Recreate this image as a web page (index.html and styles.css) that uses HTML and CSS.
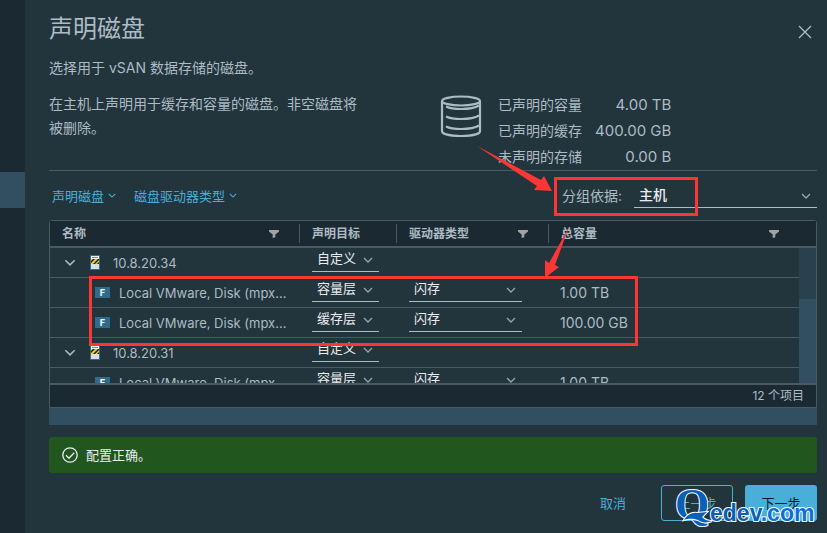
FILE: index.html
```html
<!DOCTYPE html>
<html lang="zh-CN">
<head>
<meta charset="utf-8">
<title>声明磁盘</title>
<link rel="stylesheet" href="styles.css">
</head>
<body>
<svg class="defs" aria-hidden="true">
  <symbol id="chevron" viewBox="0 0 10 6"><path d="M1 1l4 4 4-4" fill="none" stroke="currentColor" stroke-width="1.3"/></symbol>
  <symbol id="filter" viewBox="0 0 10 8"><path d="M0 0h10v1.500L6.300 4.500V7.200L3.700 8V4.500L0 1.500z" fill="currentColor"/></symbol>
  <symbol id="host" viewBox="0 0 10 15">
    <path d="M0 0h10v15H0z" fill="#2b6e8f"/><path d="M1 1h8v13H1z" fill="#f2f4f5"/>
    <path d="M2 2h6v1H2z" fill="#7d8e96"/><path d="M1 9h8v5H1z" fill="#d9dee0"/>
    <path d="M1 4h8v5H1z" fill="#f2c81c"/><path d="M1 6l2-2h2L1 8zM3 9l5-5h1v1L5 9zM7 9l2-2v2z" fill="#1a1a1a"/>
  </symbol>
</svg>
<div class="app">
  <aside class="rail"><div class="rail-active"></div></aside>
  <main class="wizard">
    <header class="head">
      <h1>声明磁盘</h1>
      <button class="close" aria-label="关闭"><svg viewBox="0 0 14 14"><path d="M1 1l12 12M13 1L1 13" fill="none" stroke="currentColor" stroke-width="1.3"/></svg></button>
    </header>
    <p class="lead">选择用于 vSAN 数据存储的磁盘。</p>
    <section class="summary">
      <p>在主机上声明用于缓存和容量的磁盘。非空磁盘将被删除。</p>
      <svg class="disks" viewBox="0 0 42 44" fill="none" stroke="currentColor" stroke-width="2.200">
        <ellipse cx="21" cy="7" rx="19" ry="4.500"/><path d="M2 7v30c0 3 8 5 19 5s19-2 19-5V7"/>
        <path d="M6 12.500c4 2 9 2.500 15 2.500 8 0 14-1 18-3.500M6 22.500c4 2 9 2.500 15 2.500 8 0 14-1 18-3.500M6 32.500c4 2 9 2.500 15 2.500 8 0 14-1 18-3.500"/>
      </svg>
      <dl class="stats">
        <dt>已声明的容量</dt><dd>4.00 TB</dd>
        <dt>已声明的缓存</dt><dd>400.00 GB</dd>
        <dt>未声明的存储</dt><dd>0.00 B</dd>
      </dl>
    </section>
    <div class="toolbar">
      <button class="link">声明磁盘<svg class="chev"><use href="#chevron"/></svg></button>
      <button class="link">磁盘驱动器类型<svg class="chev"><use href="#chevron"/></svg></button>
      <label class="group-label" for="group">分组依据:</label>
      <span class="pick pick-group"><select id="group"><option>主机</option></select><svg class="chev"><use href="#chevron"/></svg></span>
    </div>
    <section class="grid">
      <div class="viewport">
        <table>
          <colgroup><col><col class="c-target"><col class="c-drive"><col class="c-size"><col class="c-bar"></colgroup>
          <thead><tr>
            <th><div class="th">名称<svg class="filter"><use href="#filter"/></svg></div></th>
            <th><div class="th">声明目标</div></th>
            <th><div class="th">驱动器类型<svg class="filter"><use href="#filter"/></svg></div></th>
            <th><div class="th">总容量<svg class="filter"><use href="#filter"/></svg></div></th>
            <td></td>
          </tr></thead>
          <tbody>
            <tr><td><div class="name"><svg class="toggle"><use href="#chevron"/></svg><svg class="host"><use href="#host"/></svg>10.8.20.34</div></td>
              <td><span class="pick"><select aria-label="声明目标"><option>自定义</option></select><svg class="chev"><use href="#chevron"/></svg></span></td><td></td><td></td><td></td></tr>
            <tr><td><div class="name disk"><span class="flash">F</span>Local VMware, Disk (mpx...</div></td>
              <td><span class="pick"><select aria-label="声明目标"><option>容量层</option></select><svg class="chev"><use href="#chevron"/></svg></span></td>
              <td><span class="pick pick-drive"><select aria-label="驱动器类型"><option>闪存</option></select><svg class="chev"><use href="#chevron"/></svg></span></td><td class="size">1.00 TB</td><td></td></tr>
            <tr><td><div class="name disk"><span class="flash">F</span>Local VMware, Disk (mpx...</div></td>
              <td><span class="pick"><select aria-label="声明目标"><option>缓存层</option></select><svg class="chev"><use href="#chevron"/></svg></span></td>
              <td><span class="pick pick-drive"><select aria-label="驱动器类型"><option>闪存</option></select><svg class="chev"><use href="#chevron"/></svg></span></td><td class="size">100.00 GB</td><td></td></tr>
            <tr><td><div class="name"><svg class="toggle"><use href="#chevron"/></svg><svg class="host"><use href="#host"/></svg>10.8.20.31</div></td>
              <td><span class="pick"><select aria-label="声明目标"><option>自定义</option></select><svg class="chev"><use href="#chevron"/></svg></span></td><td></td><td></td><td></td></tr>
            <tr><td><div class="name disk"><span class="flash">F</span>Local VMware, Disk (mpx...</div></td>
              <td><span class="pick"><select aria-label="声明目标"><option>容量层</option></select><svg class="chev"><use href="#chevron"/></svg></span></td>
              <td><span class="pick pick-drive"><select aria-label="驱动器类型"><option>闪存</option></select><svg class="chev"><use href="#chevron"/></svg></span></td><td class="size">1.00 TB</td><td></td></tr>
          </tbody>
        </table>
        <div class="scrollbar"><div class="thumb"></div></div>
      </div>
      <footer class="count">12 个项目</footer>
    </section>
    <div class="hbar"></div>
    <div class="status" role="status">
      <svg viewBox="0 0 16 16" fill="none" stroke="currentColor" stroke-width="1.300"><circle cx="8" cy="8" r="7.200"/><path d="M4 8.200l3 3 5.200-5.400"/></svg>配置正确。
    </div>
    <div class="actions">
      <button class="btn plain">取消</button>
      <button class="btn outline">上一步</button>
      <button class="btn solid">下一步</button>
    </div>
  </main>
</div>
<svg class="marks" viewBox="0 0 827 533">
  <g fill="none" stroke="#fb3735" stroke-width="3">
    <path d="M555.500 178.500h141v36h-141zM90.500 277.500h546v67h-546z"/>
  </g>
  <g fill="#fb3735">
    <path d="M477 146L541 180l3-4 8 15-18-1 3-4z"/>
    <path d="M569 227L555 265l4 2-14 11v-18l4 3z"/>
  </g>
  <g class="brand">
    <text class="brand-q" x="675" y="519">Q</text>
    <path d="M684 520c3-5 8-8 13-7l10-1-5 5c3 3 6 4 10 4-5 2-10 2-14-1-4-1-8-2-14 0z"/>
    <text class="brand-name" x="710" y="521">edev<tspan class="brand-tail">.com</tspan></text>
  </g>
</svg>
</body>
</html>
```
FILE: styles.css
```css
* { box-sizing: border-box; }
body {
  margin: 0;
  background: #22343c;
  color: #adbbc4;
  font: 14px/24px Inter, "Noto Sans CJK SC", sans-serif;
  overflow: hidden;
}
h1, p, dl, dd { margin: 0; font-weight: 400; }
button, select { font: inherit; color: inherit; background: none; border: 0; padding: 0; margin: 0; }
svg { display: block; flex: none; }
.defs { position: absolute; width: 0; height: 0; }
.app { display: flex; min-height: 100vh; }
.rail { flex: 0 0 25px; background: #1b2a32; padding-top: 172px; }
.rail-active { height: 36px; background: #324f61; }
.wizard { flex: 1; min-width: 0; padding: 14px 10px 12px 24px; }
.head { display: flex; justify-content: space-between; }
h1 { font-size: 24px; line-height: 30px; }
.close { width: 24px; height: 36px; padding: 0 5px; }
.close svg { width: 14px; height: 14px; }
.lead { margin-top: 6px; }
.summary {
  display: grid;
  grid-template-columns: minmax(0, 320px) 97px auto;
  column-gap: 16px;
  justify-content: start;
  margin-top: 12px;
  border-bottom: 1px solid #495a64;
}
.disks { width: 42px; height: 44px; margin-top: 2px; justify-self: end; }
.stats { display: grid; grid-template-columns: auto minmax(76px, auto); column-gap: 13px; line-height: 26px; }
.stats dd { font-size: 15px; text-align: right; }
.toolbar { display: flex; align-items: center; height: 49px; padding-left: 3px; font-size: 13px; }
.link { display: flex; align-items: center; gap: 4px; margin-right: 18px; color: #49afd9; }
.chev { width: 8px; height: 5px; }
.group-label { margin-left: auto; font-size: 14px; }
.pick { display: flex; align-items: flex-start; width: 67px; height: 24px; border-bottom: 1px solid #adbbc4; position: relative; font-size: 13px; }
.pick select { appearance: none; flex: 1; height: 20px; line-height: 20px; padding-left: 5px; color: #eaedf0; }
.pick .chev { position: absolute; right: 6px; top: 9px; width: 10px; height: 6px; color: #98a5ad; pointer-events: none; }
.pick-drive { width: 113px; }
.pick-group { width: 183px; margin-left: 12px; font-size: 14px; }
.pick-group select { height: 22px; font-weight: 500; }
.grid { border: 1px solid #495a64; border-radius: 3px 3px 0 0; background: #1b2a32; }
.viewport { position: relative; height: 162px; overflow: hidden; background: #22343c; }
table { width: 100%; table-layout: fixed; border-collapse: separate; border-spacing: 0; }
.c-target { width: 97px; }
.c-drive { width: 152px; }
.c-size { width: 251px; }
.c-bar { width: 17px; }
thead { background: #1b2a32; }
thead th, thead td { height: 27px; padding: 0; border-bottom: 2px solid #495a64; font-size: 12px; font-weight: 700; }
.th { display: flex; align-items: center; justify-content: space-between; height: 19px; padding: 0 20px 0 12px; border-left: 1px solid #495a64; }
th:first-child .th { border-left: 0; padding-left: 12px; }
.filter { width: 10px; height: 8px; color: #a0a4a6; }
tbody td { height: 30px; padding: 0 0 0 13px; border-bottom: 1px solid #495a64; vertical-align: top; }
.name { display: flex; align-items: center; height: 29px; padding-left: 1px; font-size: 13px; white-space: nowrap; }
.toggle { width: 12px; height: 7px; margin-right: 14px; }
.host { width: 10px; height: 15px; margin-right: 13px; }
.name.disk { padding-left: 32px; }
.flash { width: 15px; height: 11px; margin-right: 9px; background: #2f6c8c; color: #fff; font-size: 9px; font-weight: 700; line-height: 11px; text-align: center; }
tbody .size { line-height: 29px; padding-left: 12px; }
.scrollbar { position: absolute; top: 27px; right: 0; bottom: 0; width: 17px; padding-top: 51px; background: #29404e; }
.thumb { height: 100%; background: #324f61; }
.count { height: 24px; padding-right: 12px; border-top: 2px solid #495a64; font-size: 12px; line-height: 22px; text-align: right; }
.hbar { height: 17px; background: #324f61; }
.status { display: flex; align-items: center; gap: 8px; height: 36px; margin-top: 12px; padding-left: 13px; border-radius: 3px; background: #22561f; color: #eaedf0; font-size: 13px; }
.status svg { width: 16px; height: 16px; }
.actions { display: flex; justify-content: flex-end; gap: 12px; margin-top: 12px; }
.btn { width: 72px; height: 36px; border: 1px solid transparent; border-radius: 3px; font-size: 13px; color: #49afd9; }
.outline { border-color: #49afd9; }
.solid { background: #49afd9; color: #10181c; }
.marks { position: absolute; top: 0; left: 0; width: 827px; height: 533px; pointer-events: none; }
.brand { fill: #0a5fb8; stroke: #fff; stroke-width: 2px; paint-order: stroke; }
.brand-q { font: 700 44px "Liberation Serif", serif; }
.brand-name { font: 700 23px "Liberation Sans", sans-serif; }
.brand-tail { fill: #0f6fd6; }
```
